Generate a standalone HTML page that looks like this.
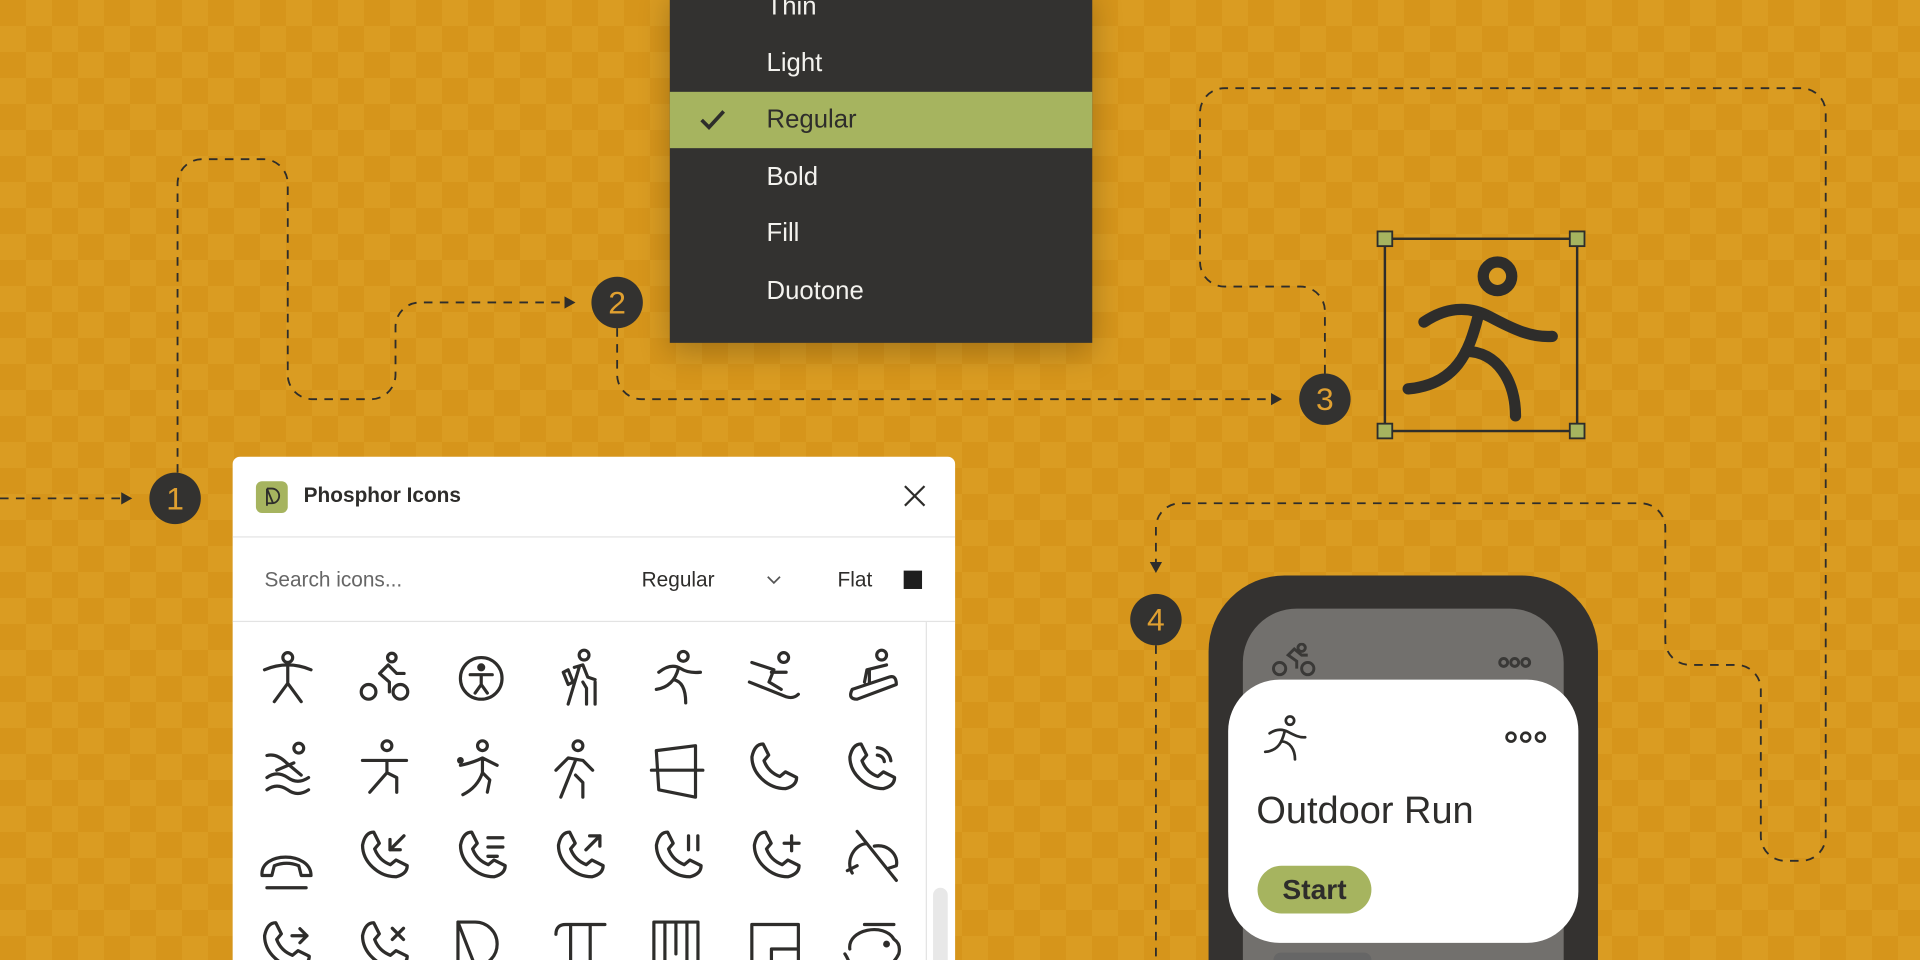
<!DOCTYPE html>
<html><head><meta charset="utf-8"><style>
html,body{margin:0;padding:0;width:1920px;height:960px;overflow:hidden}
#wrap{position:absolute;left:0;top:0;width:1920px;height:960px;overflow:hidden;background-color:#d6951b;background-image:linear-gradient(45deg,#da9c22 25%,transparent 25%,transparent 75%,#da9c22 75%),linear-gradient(45deg,#da9c22 25%,transparent 25%,transparent 75%,#da9c22 75%);background-size:52px 52px;background-position:0 0,26px 26px;font-family:"Liberation Sans",sans-serif}
#s{position:absolute;left:0;top:0;width:1568px;height:784px;overflow:hidden;transform:scale(1.22449);transform-origin:0 0}
.a{position:absolute}
.menu{left:547px;top:-10px;width:345px;height:290px;background:#333230;box-shadow:0 8px 24px rgba(0,0,0,.25)}
.mi{position:absolute;left:79px;color:#f3f2ee;font-size:21px;line-height:46px}
.badge{position:absolute;width:42px;height:42px;border-radius:50%;background:#333230;color:#e0a030;font-size:26px;text-align:center;line-height:42px}
.panel{left:190px;top:373px;width:590px;height:411px;background:#fff;border-radius:6px 6px 0 0;overflow:hidden}
</style></head><body><div id="wrap"><div id="s">
<svg class="a" style="left:0;top:0" width="1568" height="784" fill="none" stroke="#2e2d2b" stroke-width="1.5" stroke-dasharray="7 6">
<path d="M0,407 H104"/><path d="M145,386 V150 A20,20 0 0 1 165,130 H215 A20,20 0 0 1 235,150 V306 A20,20 0 0 0 255,326 H303 A20,20 0 0 0 323,306 V267 A20,20 0 0 1 343,247 H466"/>
<path d="M504,268 V306 A20,20 0 0 0 524,326 H1042"/>
<path d="M1082,305 V254 A20,20 0 0 0 1062,234 H1000 A20,20 0 0 1 980,214 V92 A20,20 0 0 1 1000,72 H1471 A20,20 0 0 1 1491,92 V683 A20,20 0 0 1 1471,703 H1458 A20,20 0 0 1 1438,683 V563 A20,20 0 0 0 1418,543 H1380 A20,20 0 0 1 1360,523 V431 A20,20 0 0 0 1340,411 H964 A20,20 0 0 0 944,431 V462"/>
<path d="M944,527 V784"/>
<g stroke-dasharray="none" fill="#2e2d2b" stroke="none"><path d="M108,407 l-9,-5 v10z"/><path d="M470,247 l-9,-5 v10z"/><path d="M1047,326 l-9,-5 v10z"/><path d="M944,468 l-5,-9 h10z"/></g>
</svg>
<div class="a menu">
<div class="mi" style="top:-7px">Thin</div>
<div class="mi" style="top:39px">Light</div>
<div style="position:absolute;left:0;top:85px;width:345px;height:46px;background:#a6b45f"></div>
<svg style="position:absolute;left:24px;top:98px" width="22" height="20"><path d="M2,10 l6,6 l12,-13" stroke="#2e2d2b" stroke-width="3" fill="none"/></svg>
<div class="mi" style="top:85px;color:#2e2d2b">Regular</div>
<div class="mi" style="top:132px">Bold</div>
<div class="mi" style="top:178px">Fill</div>
<div class="mi" style="top:225px">Duotone</div>
</div>
<div class="badge" style="left:122px;top:386px">1</div>
<div class="badge" style="left:483px;top:226px">2</div>
<div class="badge" style="left:1061px;top:305px">3</div>
<div class="badge" style="left:923px;top:485px">4</div>
<svg class="a" style="left:1124px;top:188px" width="172" height="172">
<rect x="7" y="7" width="157" height="157" fill="none" stroke="#2e2d2b" stroke-width="2"/>
<g fill="#a6b45f" stroke="#2e2d2b" stroke-width="1.5"><rect x="1" y="1" width="12" height="12"/><rect x="158" y="1" width="12" height="12"/><rect x="1" y="158" width="12" height="12"/><rect x="158" y="158" width="12" height="12"/></g>
<g transform="translate(7,7) scale(0.613)" fill="none" stroke="#2e2d2b" stroke-width="15" stroke-linecap="round"><circle cx="150" cy="50" r="19"/><path d="M52,111 C80,92 110,88 140,104 C170,120 195,132 223,130"/><path d="M124,104 C112,150 96,194 31,200"/><path d="M108,150 C150,150 174,190 174,236"/></g>
</svg>
<div class="a panel">
<div style="position:absolute;left:19px;top:20px;width:26px;height:26px;border-radius:5px;background:#a6b45f"><svg width="26" height="26"><path d="M9,6 v14 M9,6 h4 a6,6 0 0 1 0,12 h-4 M9,6 l5,12" stroke="#2e2d2b" stroke-width="1.5" fill="none"/></svg></div>
<div style="position:absolute;left:58px;top:22px;font-size:17px;font-weight:bold;color:#2e2d2b">Phosphor Icons</div>
<svg style="position:absolute;left:548px;top:23px" width="18" height="18"><path d="M1,1 L17,17 M17,1 L1,17" stroke="#2e2d2b" stroke-width="1.8"/></svg>
<div style="position:absolute;left:0;top:65px;width:590px;height:1px;background:#e3e3e3"></div>
<div style="position:absolute;left:26px;top:91px;font-size:17px;color:#666">Search icons...</div>
<div style="position:absolute;left:334px;top:91px;font-size:17px;color:#2e2d2b">Regular</div>
<svg style="position:absolute;left:436px;top:96px" width="12" height="10"><path d="M1,2 l5,5 l5,-5" stroke="#555" stroke-width="1.4" fill="none"/></svg>
<div style="position:absolute;left:494px;top:91px;font-size:17px;color:#2e2d2b">Flat</div>
<div style="position:absolute;left:548px;top:93px;width:15px;height:15px;background:#1e1e1e"></div>
<div style="position:absolute;left:0;top:134px;width:590px;height:1px;background:#e3e3e3"></div>
<div style="position:absolute;left:566px;top:135px;width:1px;height:300px;background:#e3e3e3"></div>
<div style="position:absolute;left:572px;top:352px;width:12px;height:80px;border-radius:6px;background:#e8e8e8"></div>
</div>
<svg class="a" style="left:190px;top:373px" width="590" height="411">
<defs>
<g id="phone"><path d="M32,80 C40,40 56,24 80,24 L104,72 L84,96 C96,128 120,152 152,164 L176,144 L224,168 C224,192 208,208 176,216 C100,216 32,152 32,80Z"/></g>
</defs>
<g fill="none" stroke="#2e2d2b" stroke-width="2.6" stroke-linecap="round" stroke-linejoin="round">
<g transform="translate(24,158)"><circle cx="21" cy="6" r="4"/><path d="M2,16 Q21,8 40,16 M21,12 V27 L10,42 M21,27 L32,42"/></g>
<g transform="translate(102,158)"><circle cx="28" cy="6" r="3.5"/><circle cx="9" cy="34" r="6"/><circle cx="35" cy="34" r="6"/><path d="M26,34 V26 L18,19 L25,12 L32,19 H38"/></g>
<g transform="translate(182,158)"><circle cx="21" cy="23" r="17"/><circle cx="21" cy="14" r="2" fill="#2e2d2b"/><path d="M12,20 H30 M21,20 V28 L16,35 M21,28 L26,35"/></g>
<g transform="translate(262,156)"><circle cx="25" cy="6" r="4"/><path d="M17,16 L24,14 L28,24 L34,26 M21,16 L12,46 M24,28 L27,33 V46 M34,28 V46 M8,20 L12,30 L16,28 L12,18Z"/></g>
<g transform="translate(340,156)"><circle cx="28" cy="7" r="4"/><path d="M8,20 Q18,12 26,17 Q32,21 42,20 M24,17 Q20,32 6,34 M20,26 Q30,28 30,45"/></g>
<g transform="translate(418,156)"><circle cx="32" cy="8" r="4"/><path d="M4,28 L34,40 Q40,42 44,38 M6,12 L24,18 L20,28 L30,34 M22,20 L34,20"/></g>
<g transform="translate(498,156)"><circle cx="32" cy="6" r="4"/><path d="M8,34 L38,24 Q44,22 44,30 L12,42 Q4,42 8,34 M18,28 L20,18 L36,14 M22,18 V28"/></g>
<g transform="translate(24,230)"><circle cx="30" cy="8" r="4"/><path d="M4,14 Q12,12 20,20 L32,30 M12,26 L26,20 M4,32 Q12,26 21,32 Q29,38 38,32 M4,42 Q12,36 21,42 Q29,48 38,42"/></g>
<g transform="translate(104,230)"><circle cx="22" cy="6" r="4"/><path d="M2,18 H38 M22,18 V28 L8,44 M22,28 L30,32 V44"/></g>
<g transform="translate(182,230)"><circle cx="22" cy="6" r="4"/><circle cx="4" cy="18" r="1.5" fill="#2e2d2b"/><path d="M4,22 Q14,20 22,16 L34,22 M22,16 L22,28 Q18,40 6,46 M22,28 L28,34 L26,44"/></g>
<g transform="translate(260,230)"><circle cx="22" cy="6" r="4"/><path d="M4,26 L14,16 L26,18 L34,26 M20,18 L8,48 M20,30 L26,36 V48"/></g>
<g transform="translate(338,232)"><path d="M4,24 H46 M8,8 L40,4 V46 L10,40 Z"/></g>
<g transform="translate(418,230) scale(0.19)" stroke-width="14"><use href="#phone"/></g>
<g transform="translate(498,230) scale(0.19)" stroke-width="14"><use href="#phone"/><path d="M150,40 A64,64 0 0 1 208,96 M150,72 A32,32 0 0 1 180,100"/></g>
<g transform="translate(20,310)"><path d="M4,32 C2,12 44,12 44,32 L36,32 L34,24 Q24,20 14,24 L12,32 Z M8,42 H40"/></g>
<g transform="translate(100,302) scale(0.19)" stroke-width="14"><use href="#phone"/><path d="M210,40 L150,100 M150,56 V100 H194"/></g>
<g transform="translate(180,302) scale(0.19)" stroke-width="14"><use href="#phone"/><path d="M150,48 H214 M150,88 H214 M150,128 H190"/></g>
<g transform="translate(260,302) scale(0.19)" stroke-width="14"><use href="#phone"/><path d="M150,100 L210,40 M166,40 H210 V84"/></g>
<g transform="translate(340,302) scale(0.19)" stroke-width="14"><use href="#phone"/><path d="M170,40 V100 M210,40 V100"/></g>
<g transform="translate(420,302) scale(0.19)" stroke-width="14"><use href="#phone"/><path d="M160,72 H224 M192,40 V104"/></g>
<g transform="translate(498,302)"><path d="M12,4 L44,44 M8,38 C2,28 10,14 20,14 M26,16 C38,14 46,24 44,32 L38,34 M4,36 L12,32"/></g>
<g transform="translate(20,376) scale(0.19)" stroke-width="14"><use href="#phone"/><path d="M150,80 H214 M184,50 L214,80 L184,110"/></g>
<g transform="translate(100,376) scale(0.19)" stroke-width="14"><use href="#phone"/><path d="M160,48 L208,96 M208,48 L160,96"/></g>
<g transform="translate(180,376)"><path d="M4,4 V46 M4,4 H18 A18,18 0 0 1 18,40 H4 M4,4 L18,40"/></g>
<g transform="translate(260,376)"><path d="M4,14 Q4,6 12,6 H44 M16,6 V46 M32,6 V38 Q32,46 40,44"/></g>
<g transform="translate(340,376)"><path d="M4,4 H40 V46 H4 Z M13,4 V30 M22,4 V30 M31,4 V30 M13,30 V46 M31,30 V46"/></g>
<g transform="translate(420,378)"><path d="M4,4 H42 V46 H4 Z M20,24 H42 V46 H20Z"/></g>
<g transform="translate(496,376)"><path d="M20,6 H44 M8,26 C6,10 36,4 44,18 Q50,22 48,30 Q44,38 38,40 V46 M4,30 Q8,36 10,46"/><circle cx="38" cy="22" r="1.5" fill="#2e2d2b"/></g>
</g></svg>
<div class="a" style="left:987px;top:470px;width:318px;height:314px;border-radius:62px 62px 0 0;background:#343230"></div>
<div class="a" style="left:1015px;top:497px;width:262px;height:287px;border-radius:44px 44px 0 0;background:#72706d"></div>
<svg class="a" style="left:1037px;top:525px" width="240" height="30" fill="none" stroke="#3a3937" stroke-width="2.4"><circle cx="26" cy="4" r="3"/><circle cx="8" cy="21" r="5"/><circle cx="31" cy="21" r="5"/><path d="M22,21 V15 L15,10 L20,5 L26,10 H31"/><circle cx="191" cy="16" r="3.2"/><circle cx="200" cy="16" r="3.2"/><circle cx="209" cy="16" r="3.2"/></svg>
<div class="a" style="left:1003px;top:555px;width:286px;height:215px;border-radius:42px;background:#fff"></div>
<svg class="a" style="left:1028px;top:580px" width="240" height="46" fill="none" stroke="#2e2d2b" stroke-width="2.2" stroke-linecap="round"><g transform="scale(0.17)" stroke-width="13"><circle cx="150" cy="50" r="20"/><path d="M52,111 C80,92 110,88 140,104 C170,120 195,132 223,130"/><path d="M124,104 C112,150 96,194 31,200"/><path d="M108,150 C150,150 174,190 174,236"/></g><circle cx="206" cy="22" r="3.6"/><circle cx="218" cy="22" r="3.6"/><circle cx="230" cy="22" r="3.6"/></svg>
<div class="a" style="left:1026px;top:644px;font-size:31px;color:#2e2d2b">Outdoor Run</div>
<div class="a" style="left:1027px;top:707px;width:93px;height:39px;border-radius:20px;background:#a6b45f;color:#2e2d2b;font-size:23px;font-weight:bold;text-align:center;line-height:39px">Start</div>
<div class="a" style="left:1040px;top:778px;width:80px;height:6px;border-radius:10px 10px 0 0;background:#666"></div>
</div></div></body></html>
